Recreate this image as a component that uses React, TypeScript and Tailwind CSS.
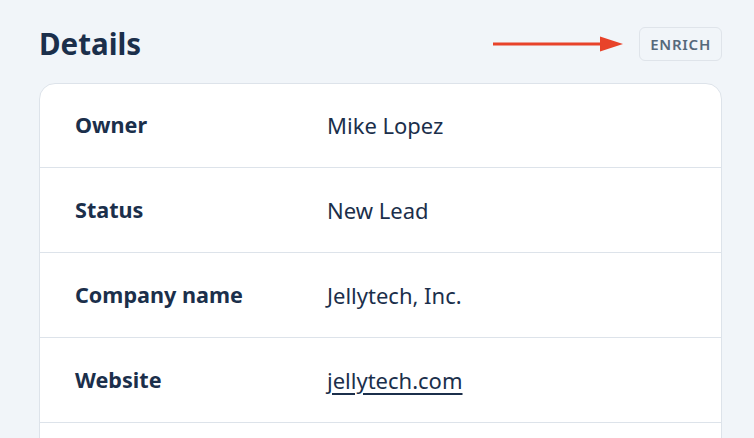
import React from "react";

const rows: { label: string; value: string; link?: boolean }[] = [
  { label: "Owner", value: "Mike Lopez" },
  { label: "Status", value: "New Lead" },
  { label: "Company name", value: "Jellytech, Inc." },
  { label: "Website", value: "jellytech.com", link: true },
  { label: "", value: "" },
];

export default function App() {
  return (
    <div
      className="w-[754px] h-[438px] overflow-hidden bg-[#f1f5f9] text-[#1b2f4b]"
      style={{ fontFamily: '"Source Sans Pro", "Noto Sans", sans-serif' }}
    >
      <div className="pl-[39px] pr-[32px] pt-[24px]">
        <div className="flex items-center justify-between h-[40px]">
          <h1 className="text-[29.5px] font-bold leading-none">Details</h1>
          <div className="flex items-center gap-[15px]">
            <svg width="131" height="20" viewBox="0 0 131 20">
              <line x1="0" y1="10" x2="110" y2="10" stroke="#e8432a" strokeWidth="3" />
              <polygon points="107,2.5 130,10 107,17.5" fill="#e8432a" />
            </svg>
            <button className="h-[34px] px-[10px] rounded-[6px] border border-[#dfe4ea] text-[15px] font-semibold tracking-[0.05em] text-[#56697b] bg-[#f1f5f9]">
              ENRICH
            </button>
          </div>
        </div>
        <div className="mt-[19px] bg-white border border-[#dde3ea] rounded-[16px]">
          {rows.map((r, i) => (
            <div
              key={i}
              className={`flex items-center ${i > 0 ? "h-[85px] border-t border-[#dde3ea]" : "h-[83px]"}`}
            >
              <div className="w-[287px] pl-[35px] text-[21.6px] font-bold">{r.label}</div>
              <div className={`text-[22px] ${r.link ? "underline underline-offset-[4px] decoration-[1.5px]" : ""}`}>{r.value}</div>
            </div>
          ))}
        </div>
      </div>
    </div>
  );
}
